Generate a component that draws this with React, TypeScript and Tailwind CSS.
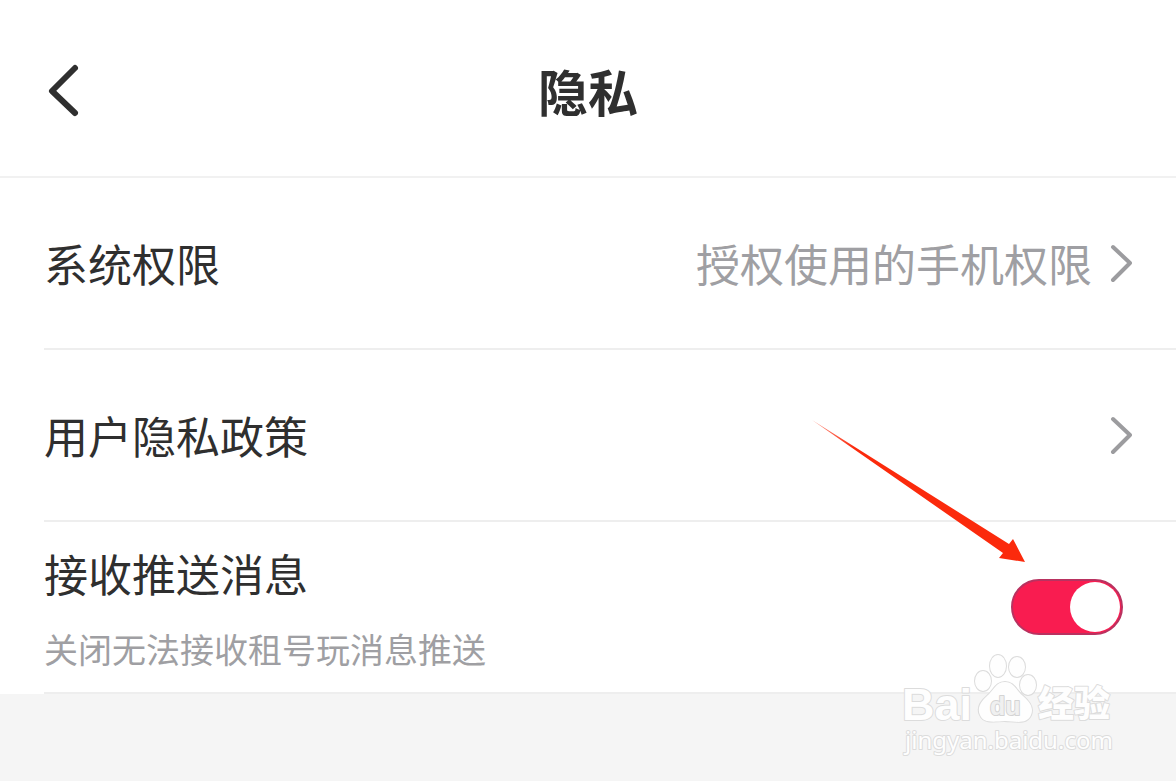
import React, { useState } from 'react';

interface SettingLinkProps {
  title: string;
  hint?: string;
}

const BackIcon: React.FC = () => (
  <svg viewBox="0 0 40 60" className="h-[60px] w-10" fill="none" stroke="#2f2f2f" strokeWidth="6" strokeLinecap="round" strokeLinejoin="round" aria-hidden="true">
    <path d="M31 8 L8 31 L31 53" />
  </svg>
);

const RowChevron: React.FC = () => (
  <svg viewBox="0 0 24 40" className="h-10 w-6 shrink-0" fill="none" stroke="#9c9c9f" strokeWidth="4" strokeLinecap="round" strokeLinejoin="round" aria-hidden="true">
    <path d="M5 4 L22 20 L5 37" />
  </svg>
);

const SettingLink: React.FC<SettingLinkProps> = ({ title, hint }) => (
  <li className="bg-white pl-11">
    <button type="button" className="flex h-[172px] w-full items-center justify-between border-b-2 border-[#eeeeee] pr-11 text-left">
      <span>{title}</span>
      <span className="flex items-center gap-4 text-[#9f9fa3]">
        {hint}
        <RowChevron />
      </span>
    </button>
  </li>
);

const PointerArrow: React.FC = () => (
  <svg viewBox="0 0 216 144" className="pointer-events-none absolute -top-[103px] right-[149px] h-36 w-[216px]" aria-hidden="true">
    <defs>
      <linearGradient id="arrow-fade" x1="0" y1="0" x2="1" y2="0">
        <stop offset="0" stopColor="#fb2a0c" stopOpacity="0.5" />
        <stop offset="0.2" stopColor="#fb2a0c" />
      </linearGradient>
    </defs>
    <path d="M1 1 L198 125 L202 120 L214 143 L188 139 L192 134 Z" fill="url(#arrow-fade)" />
  </svg>
);

const Watermark: React.FC = () => (
  <svg
    viewBox="0 0 224 112"
    className="pointer-events-none absolute right-14 bottom-5 h-28 w-56 [paint-order:stroke]"
    fill="#fefefe"
    stroke="#dcdcdc"
    strokeWidth="2"
    strokeLinejoin="round"
  >
    <ellipse cx="87" cy="32" rx="8" ry="10" />
    <ellipse cx="102" cy="17" rx="8" ry="11" />
    <ellipse cx="121" cy="18" rx="8" ry="10" />
    <ellipse cx="132" cy="36" rx="8" ry="10" />
    <path d="M109 33 C100 33 98 41 91 47 C84 53 81 60 84 66 C87 74 96 73 109 72 C122 73 131 75 135 66 C138 59 134 53 127 47 C120 41 118 33 109 33 Z" />
    <text x="6" y="71" fontSize="45" className="font-['Liberation_Sans'] font-bold">Bai</text>
    <text x="94" y="66" fontSize="25" fill="#f0f0f0" stroke="#d4d4d4" className="font-['Liberation_Sans'] font-bold">du</text>
    <text x="142" y="68" fontSize="36" className="font-['Noto_Sans_CJK_SC'] font-black">经验</text>
    <text x="9" y="100" fontSize="24" className="font-['Noto_Sans']">jingyan.baidu.com</text>
  </svg>
);

export default function App() {
  const [push, setPush] = useState(true);

  return (
    <div className="relative min-h-screen overflow-hidden bg-[#f5f5f5] font-['Noto_Sans_CJK_SC',sans-serif] text-[44px] leading-[64px] text-[#2f2f2f]">
      <header className="grid h-[178px] grid-cols-[1fr_auto_1fr] items-center border-b-2 border-[#f1f1f1] bg-white pt-1">
        <button type="button" aria-label="返回" className="ml-11 w-fit">
          <BackIcon />
        </button>
        <h1 className="text-[50px] font-bold">隐私</h1>
      </header>

      <ul>
        <SettingLink title="系统权限" hint="授权使用的手机权限" />
        <SettingLink title="用户隐私政策" />
        <li className="relative bg-white pl-11">
          <div className="flex h-[172px] items-center justify-between border-b-2 border-[#eeeeee] pr-[53px]">
            <label htmlFor="push">
              <span className="block">接收推送消息</span>
              <span className="mt-5 block text-[34px] leading-[48px] text-[#9f9fa3]">关闭无法接收租号玩消息推送</span>
            </label>
            <input
              id="push"
              type="checkbox"
              checked={push}
              onChange={(e) => setPush(e.target.checked)}
              className="flex h-14 w-28 shrink-0 appearance-none items-center rounded-full border-2 border-[#b93260] bg-[#f91c50] pr-px before:size-[50px] before:rounded-full before:bg-white checked:justify-end not-checked:bg-gray-300"
            />
          </div>
          <PointerArrow />
        </li>
      </ul>

      <Watermark />
    </div>
  );
}
